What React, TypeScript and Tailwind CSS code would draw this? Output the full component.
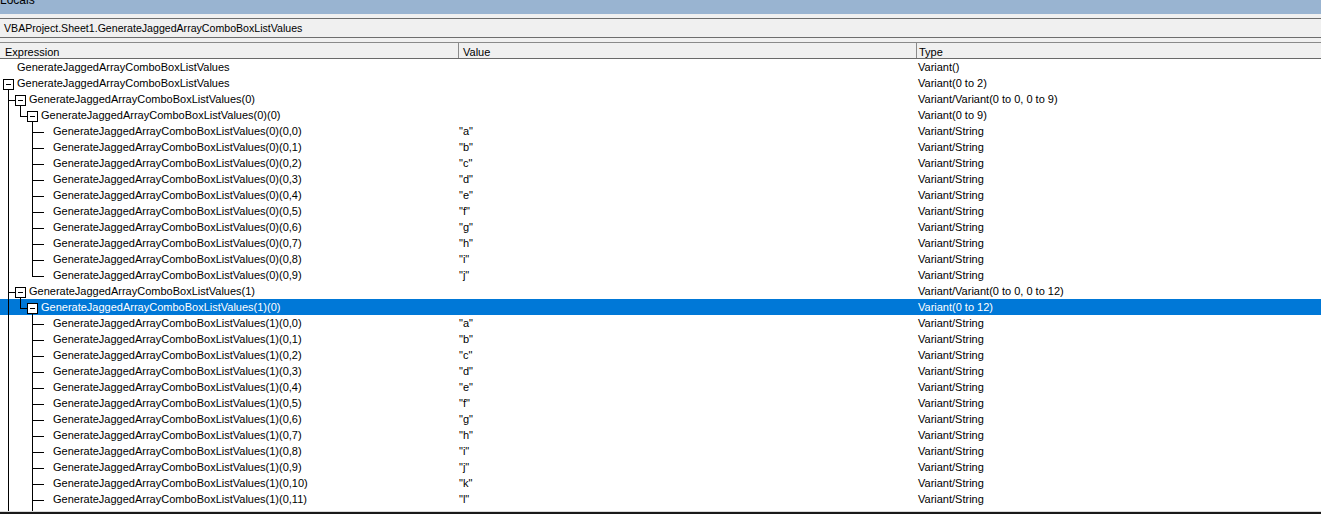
import React from "react";

type V = [number, number, number];
type H = [number, number, number];
type Glyph = { w: number; v: V[]; h: H[]; boxes: number[] };

const G: Record<string, Glyph> = {
  top: { w: 17, v: [], h: [], boxes: [] },
  root: { w: 17, v: [[8, 15, 16]], h: [], boxes: [3] },
  lvl1: { w: 29, v: [[8, 0, 16], [20, 15, 16]], h: [[8, 15, 9]], boxes: [15] },
  lvl2: { w: 41, v: [[8, 0, 16], [20, 0, 10], [32, 15, 16]], h: [[20, 27, 9]], boxes: [27] },
  leaf: { w: 53, v: [[8, 0, 16], [32, 0, 16]], h: [[32, 44, 9]], boxes: [] },
  leafLast: { w: 53, v: [[8, 0, 16], [32, 0, 10]], h: [[32, 44, 9]], boxes: [] },
};

function TreeGlyph({ g }: { g: Glyph }) {
  return (
    <svg width={g.w} height={16} className="shrink-0" shapeRendering="crispEdges">
      {g.v.map(([x, y1, y2], i) => (
        <line key={"v" + i} x1={x + 0.5} x2={x + 0.5} y1={y1} y2={y2} stroke="#000" strokeWidth={1} />
      ))}
      {g.h.map(([x1, x2, y], i) => (
        <line key={"h" + i} x1={x1} x2={x2} y1={y + 0.5} y2={y + 0.5} stroke="#000" strokeWidth={1} />
      ))}
      {g.boxes.map((bx, i) => (
        <g key={"b" + i}>
          <rect x={bx + 0.5} y={4.5} width={10} height={10} fill="#fff" stroke="#000" strokeWidth={1} />
          <line x1={bx + 3} x2={bx + 8} y1={9.5} y2={9.5} stroke="#000" strokeWidth={1} />
        </g>
      ))}
    </svg>
  );
}

type Row = { name: string; value: string; type: string; g: string; sel?: boolean };

const N = "GenerateJaggedArrayComboBoxListValues";
const letters0 = ["a", "b", "c", "d", "e", "f", "g", "h", "i", "j"];
const letters1 = ["a", "b", "c", "d", "e", "f", "g", "h", "i", "j", "k", "l"];

const rows: Row[] = [
  { name: N, value: "", type: "Variant()", g: "top" },
  { name: N, value: "", type: "Variant(0 to 2)", g: "root" },
  { name: N + "(0)", value: "", type: "Variant/Variant(0 to 0, 0 to 9)", g: "lvl1" },
  { name: N + "(0)(0)", value: "", type: "Variant(0 to 9)", g: "lvl2" },
  ...letters0.map((l, i) => ({
    name: `${N}(0)(0,${i})`,
    value: `"${l}"`,
    type: "Variant/String",
    g: i === 9 ? "leafLast" : "leaf",
  })),
  { name: N + "(1)", value: "", type: "Variant/Variant(0 to 0, 0 to 12)", g: "lvl1" },
  { name: N + "(1)(0)", value: "", type: "Variant(0 to 12)", g: "lvl2", sel: true },
  ...letters1.map((l, i) => ({
    name: `${N}(1)(0,${i})`,
    value: `"${l}"`,
    type: "Variant/String",
    g: "leaf",
  })),
];

export default function App() {
  return (
    <div className="w-[1321px] h-[514px] overflow-hidden bg-white flex flex-col font-['Liberation_Sans',Arial,sans-serif] text-black">
      {/* title bar */}
      <div className="h-[14px] shrink-0 bg-[#99b4d1] overflow-hidden">
        <div className="mt-[-6px] text-[12px] leading-[12px] pl-[0px] text-black">Locals</div>
      </div>
      <div className="h-[4px] shrink-0 bg-[#f0f0f0]" />
      {/* combo */}
      <div className="shrink-0 bg-[#f0f0f0] border-t border-b border-[#6d6d6d] h-[20px]">
        <div className="pl-[4px] text-[10.6px] leading-[18px]">VBAProject.Sheet1.GenerateJaggedArrayComboBoxListValues</div>
      </div>
      <div className="h-[4px] shrink-0 bg-[#f0f0f0]" />
      {/* header */}
      <div className="shrink-0 flex bg-[#f0f0f0] border-t border-[#8a8a8a] border-b border-b-[#696969] h-[17px] text-[11px] leading-[14px]">
        <div className="w-[459px] shrink-0 border-r border-[#8a8a8a] pl-[5px] pt-[2px]">Expression</div>
        <div className="w-[458px] shrink-0 border-r border-[#8a8a8a] pl-[4px] pt-[2px]">Value</div>
        <div className="flex-1 pl-[2px] pt-[2px]">Type</div>
      </div>
      {/* body */}
      <div className="h-[452px] shrink-0 overflow-hidden text-[11px] leading-[16px]">
        {rows.map((r, i) => (
          <div key={i} className={"flex h-[16px] " + (r.sel ? "bg-[#0078d7] text-white" : "")}>
            <div className="w-[459px] shrink-0 flex items-start overflow-hidden whitespace-nowrap">
              <TreeGlyph g={G[r.g]} />
              <span>{r.name}</span>
            </div>
            <div className="w-[458px] shrink-0 whitespace-nowrap">{r.value}</div>
            <div className="flex-1 pl-[1px] whitespace-nowrap">{r.type}</div>
          </div>
        ))}
        <div className="flex h-[16px]">
          <TreeGlyph g={G.leaf} />
        </div>
      </div>
      <div className="h-[1px] shrink-0 bg-[#d9d9d9]" />
      <div className="flex-1 bg-[#1a1a1a]" />
    </div>
  );
}
